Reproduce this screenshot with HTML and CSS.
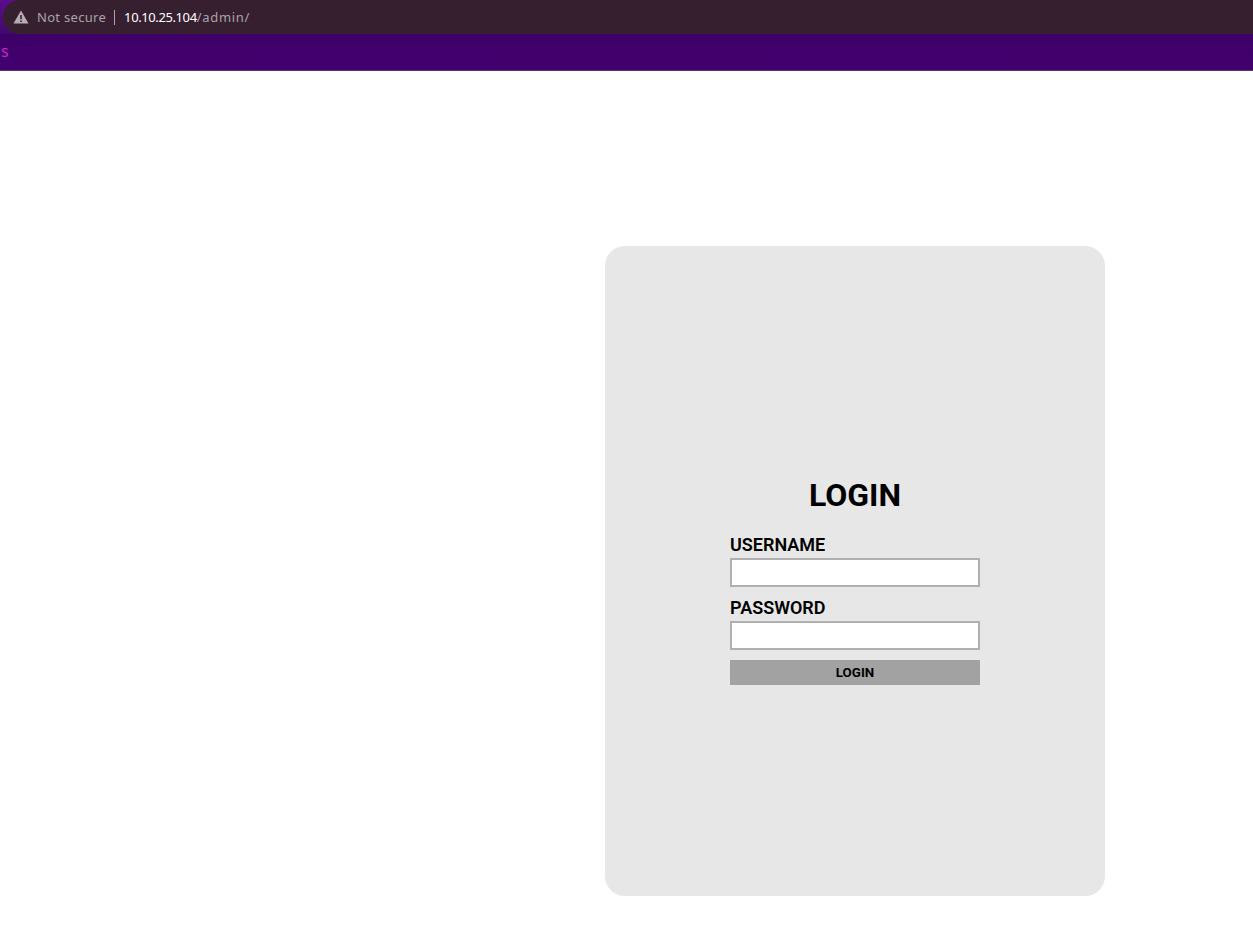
FILE: index.html
```html
<!DOCTYPE html>
<html lang="en">
<head>
<meta charset="utf-8">
<title>Login</title>
<link rel="stylesheet" href="styles.css">
</head>
<body>
<header class="chrome">
  <div class="address">
    <svg class="warn" width="16" height="14" viewBox="0 0 16 14"><path d="M8 0.5 L15.5 13.5 H0.5 Z M7.2 5 V9.2 H8.8 V5 Z M7.2 10.4 V12 H8.8 V10.4 Z" fill="#b5adb3" fill-rule="evenodd"/></svg>
    <span class="secure">Not secure</span>
    <span class="divider"></span>
    <span class="url"><span class="host">10.10.25.104</span>/admin/</span>
  </div>
</header>
<nav class="navbar"><span class="navtext">s</span></nav>
<main class="page">
  <section class="card">
    <h1 class="title">LOGIN</h1>
    <form class="form">
      <label class="label" for="u">USERNAME</label>
      <input class="input" id="u" type="text">
      <label class="label label-second" for="p">PASSWORD</label>
      <input class="input" id="p" type="password">
      <button class="button" type="button">LOGIN</button>
    </form>
  </section>
</main>
</body>
</html>
```
FILE: styles.css
```css
html, body { margin: 0; padding: 0; background: #fff; }
body { font-family: Roboto, sans-serif; color: #000; }
.chrome { height: 34px; background: linear-gradient(#5a0c8c, #3f0a6c); padding-left: 3px; display: flex; }
.address { flex: 1; display: flex; align-items: center; background: #362030; border-radius: 17px 0 0 17px; padding-left: 10px; font-family: "Noto Sans", sans-serif; font-size: 13px; line-height: 16px; color: #aaa2a8; }
.warn { flex: none; }
.secure { margin-left: 8px; letter-spacing: 0.3px; }
.divider { width: 1px; height: 15px; background: #aaa2a8; margin: 0 9px 0 8px; }
.url { letter-spacing: 0.7px; }
.host { color: #fff; letter-spacing: -0.4px; }
.navbar { height: 36px; background: linear-gradient(#3d0068, #43006f); border-bottom: 1px solid #5a3a5e; display: flex; align-items: center; }
.navtext { font-family: "Noto Sans", sans-serif; font-size: 16px; line-height: 16px; color: #c428c8; padding-left: 1px; margin-bottom: 2px; }
.page { display: flex; justify-content: flex-end; padding: 175px 148px 31px 0; }
.card { width: 500px; height: 650px; box-sizing: border-box; background: #e7e7e7; border-radius: 20px; display: flex; flex-direction: column; align-items: center; padding-top: 231px; }
.title { margin: 0; font-size: 32px; line-height: 37px; font-weight: 700; }
.form { width: 250px; display: flex; flex-direction: column; margin-top: 20px; }
.label { font-size: 18px; line-height: 21px; font-weight: 600; display: block; margin-bottom: 3px; }
.label-second { margin-top: 10px; }
.input { box-sizing: border-box; width: 250px; height: 29px; border: 2px solid #b0b0b0; background: #fff; padding: 0; margin: 0; outline: none; }
.button { margin-top: 10px; height: 25px; border: 0; padding: 0; background: #a2a2a2; font-family: Roboto, sans-serif; font-size: 13.33px; font-weight: 700; color: #000; }
```
